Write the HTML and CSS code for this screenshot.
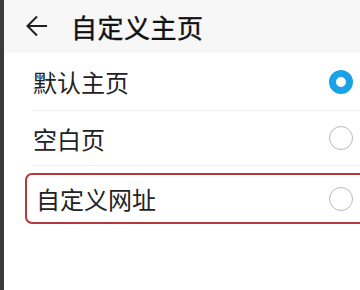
FILE: index.html
```html
<!doctype html>
<html lang="zh-CN">
  <head>
    <meta charset="UTF-8" />
    <meta name="viewport" content="width=device-width, initial-scale=1.0" />
    <title>自定义主页</title>
    <link rel="stylesheet" href="styles.css">
  </head>
  <body>
    <div class="screen">
      <div class="edge"></div>

      <div class="page">
        <div class="header">
          <svg class="back" width="22" height="22" viewBox="0 0 22 22">
            <path d="M21 11H2M11 1.5L1.5 11L11 20.5" fill="none" stroke="#1f1f1f" stroke-width="2" />
          </svg>
          <h1>自定义主页</h1>
        </div>

        <div class="list">
          <div class="row first">
            <span class="label">默认主页</span>
            <span class="radio checked"></span>
          </div>
          <div class="row second">
            <span class="label">空白页</span>
            <span class="radio"></span>
          </div>
          <!-- highlighted option -->
          <div class="row marked">
            <span class="label">自定义网址</span>
            <span class="radio"></span>
          </div>
        </div>
      </div>
    </div>
  </body>
</html>
```

FILE: styles.css
```css
* {
  margin: 0;
  padding: 0;
  box-sizing: border-box;
}

body {
  font-family: 'Noto Sans CJK SC', 'Noto Sans', sans-serif;
  background: white;
  color: #222;
  overflow: hidden;
}

.screen {
  display: flex;
  width: 360px;
  height: 290px;
}

.edge {
  width: 4px;
  flex-shrink: 0;
  background: #3b3b3d;
}

.page {
  flex: 1;
  background: white;
}

.header {
  height: 53px;
  background: #f7f7f7;
  display: flex;
  align-items: center;
  padding-left: 22px;
  padding-bottom: 1px;
}

.back {
  margin-top: -1px;
}

.header h1 {
  font-size: 26px;
  font-weight: 400;
  margin-left: 23px;
  color: #111;
  letter-spacing: 0.5px;
  -webkit-text-stroke: 0.4px #111;
}

.row {
  display: flex;
  align-items: center;
  justify-content: space-between;
  margin-left: 28px;
  padding-right: 7px;
  border-bottom: 1px solid #f1f1f1;
}

.row.first {
  height: 58px;
}

.row.second {
  height: 55px;
}

.label {
  font-size: 24px;
  margin-left: 1px;
}

.row.marked {
  height: 51px;
  margin-top: 7px;
  margin-left: 21px;
  margin-right: -14px;
  padding-left: 8px;
  padding-right: 19px;
  border: 2px solid #b3393d;
  border-radius: 7px;
}

.radio {
  width: 24px;
  height: 24px;
  border-radius: 50%;
  border: 1px solid #b8b8b8;
  background: white;
}

.radio.checked {
  border: 7px solid #1ba1e6;
}
```
